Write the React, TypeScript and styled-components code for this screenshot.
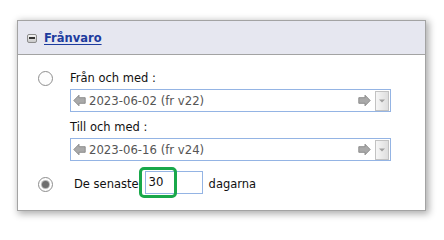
import styled, { createGlobalStyle } from 'styled-components';

const GlobalStyle = createGlobalStyle`
  html, body {
    margin: 0;
    padding: 0;
    background: #ffffff;
  }
  body {
    font-family: "DejaVu Sans", Verdana, sans-serif;
    font-size: 11.5px;
    color: #111;
  }
`;

const Page = styled.div`
  width: 444px;
  height: 228px;
  padding: 20px 0 0 17px;
  box-sizing: border-box;
`;

const Panel = styled.div`
  width: 409px;
  height: 191px;
  box-sizing: border-box;
  border: 1px solid #a3a3a3;
  background: #ffffff;
  box-shadow: 2px 2px 7px 1px rgba(0, 0, 0, 0.32);
`;

const Header = styled.div`
  height: 34px;
  box-sizing: border-box;
  display: flex;
  align-items: center;
  gap: 7px;
  padding: 0 0 0 9px;
  background: #e6e7f0;
  border-bottom: 1px solid #a3a3a3;
`;

const Toggle = styled.span`
  width: 10px;
  height: 9px;
  box-sizing: border-box;
  border: 1px solid #8c8c8c;
  border-radius: 2px;
  background: linear-gradient(#f4f4f4, #c9c9c9);
  display: flex;
  align-items: center;
  justify-content: center;
  margin-top: 1px;
  &::after {
    content: '';
    width: 6px;
    height: 2px;
    background: #333;
  }
`;

const Title = styled.a`
  font-weight: bold;
  font-size: 11.5px;
  color: #1d3c9e;
  text-decoration: underline;
  text-underline-offset: 2px;
  cursor: pointer;
`;

const Body = styled.div`
  padding: 15px 0 0 20px;
  display: grid;
  grid-template-columns: 32px 1fr;
  row-gap: 9px;
`;

const RadioCell = styled.div<{ last?: boolean }>`
  height: ${(p) => (p.last ? 23 : 16)}px;
  margin-top: ${(p) => (p.last ? 1 : 0)}px;
  padding-top: ${(p) => (p.last ? 3 : 0)}px;
  box-sizing: border-box;
  display: flex;
  align-items: center;
`;

const Radio = styled.span<{ checked?: boolean }>`
  width: 15px;
  height: 15px;
  box-sizing: border-box;
  border-radius: 50%;
  border: 1px solid #8e8e8e;
  background: #fdfdfd;
  display: flex;
  align-items: center;
  justify-content: center;
  &::after {
    content: '';
    display: ${(p) => (p.checked ? 'block' : 'none')};
    width: 7px;
    height: 7px;
    border-radius: 50%;
    background: #6f6f6f;
    box-shadow: 0 0 0 1px #b8b8b8;
  }
`;

const Fields = styled.div`
  display: flex;
  flex-direction: column;
`;

const Label = styled.div<{ top?: number }>`
  line-height: 16px;
  margin-top: ${(p) => p.top || 0}px;
  margin-bottom: 3px;
`;

const DateBox = styled.div`
  width: 321px;
  height: 23px;
  box-sizing: border-box;
  border: 1px solid #94b4e4;
  display: flex;
  align-items: center;
  padding: 0 1px 0 2px;
  gap: 3px;
`;

const DateText = styled.span`
  flex: 1;
  color: #555;
  font-size: 11.7px;
`;

const DropButton = styled.span`
  width: 14px;
  height: 20px;
  box-sizing: border-box;
  border: 1px solid #c2c2c2;
  background: linear-gradient(90deg, #f6f6f6, #dedede);
  display: flex;
  align-items: center;
  justify-content: center;
  margin-left: 1px;
`;

const LastRow = styled.div`
  display: flex;
  align-items: center;
  height: 23px;
  margin-top: 1px;
`;

const InlineText = styled.span<{ indent?: number }>`
  padding-top: 3px;
  margin-left: ${(p) => p.indent || 0}px;
`;

const InputWrap = styled.span`
  position: relative;
  margin: 0 6px;
  display: flex;
`;

const DaysInput = styled.span`
  width: 58px;
  height: 23px;
  box-sizing: border-box;
  border: 1px solid #94b4e4;
  padding: 3px 0 0 3px;
  font-size: 11.7px;
`;

const Highlight = styled.span`
  position: absolute;
  left: -6px;
  top: -4px;
  width: 38px;
  height: 31px;
  box-sizing: border-box;
  border: 3px solid #19a84a;
  border-radius: 5px;
`;

const Arrow = ({ dir }: { dir: 'left' | 'right' }) => (
  <svg width="13" height="13" viewBox="0 0 13 13">
    <polygon
      points={
        dir === 'left'
          ? '0.8,6.5 6,1.2 6,3.7 12.2,3.7 12.2,9.3 6,9.3 6,11.8'
          : '12.2,6.5 7,1.2 7,3.7 0.8,3.7 0.8,9.3 7,9.3 7,11.8'
      }
      fill="#a9a9a9"
      stroke="#878787"
      strokeWidth="0.9"
      strokeLinejoin="round"
    />
  </svg>
);

const DateField = ({ value }: { value: string }) => (
  <DateBox>
    <Arrow dir="left" />
    <DateText>{value}</DateText>
    <Arrow dir="right" />
    <DropButton>
      <svg width="6" height="4" viewBox="0 0 6 4">
        <polygon points="0,0.5 6,0.5 3,3.5" fill="#a0a0a0" />
      </svg>
    </DropButton>
  </DateBox>
);

const App = () => {
  return (
    <>
      <GlobalStyle />
      <Page>
        <Panel>
          <Header>
            <Toggle />
            <Title>Frånvaro</Title>
          </Header>
          <Body>
            <RadioCell>
              <Radio />
            </RadioCell>
            <Fields>
              <Label>Från och med :</Label>
              <DateField value="2023-06-02 (fr v22)" />
              <Label top={7}>Till och med :</Label>
              <DateField value="2023-06-16 (fr v24)" />
            </Fields>
            <RadioCell last>
              <Radio checked />
            </RadioCell>
            <LastRow>
              <InlineText indent={4}>De senaste</InlineText>
              <InputWrap>
                <DaysInput>30</DaysInput>
                <Highlight />
              </InputWrap>
              <InlineText>dagarna</InlineText>
            </LastRow>
          </Body>
        </Panel>
      </Page>
    </>
  );
};

export default App;
